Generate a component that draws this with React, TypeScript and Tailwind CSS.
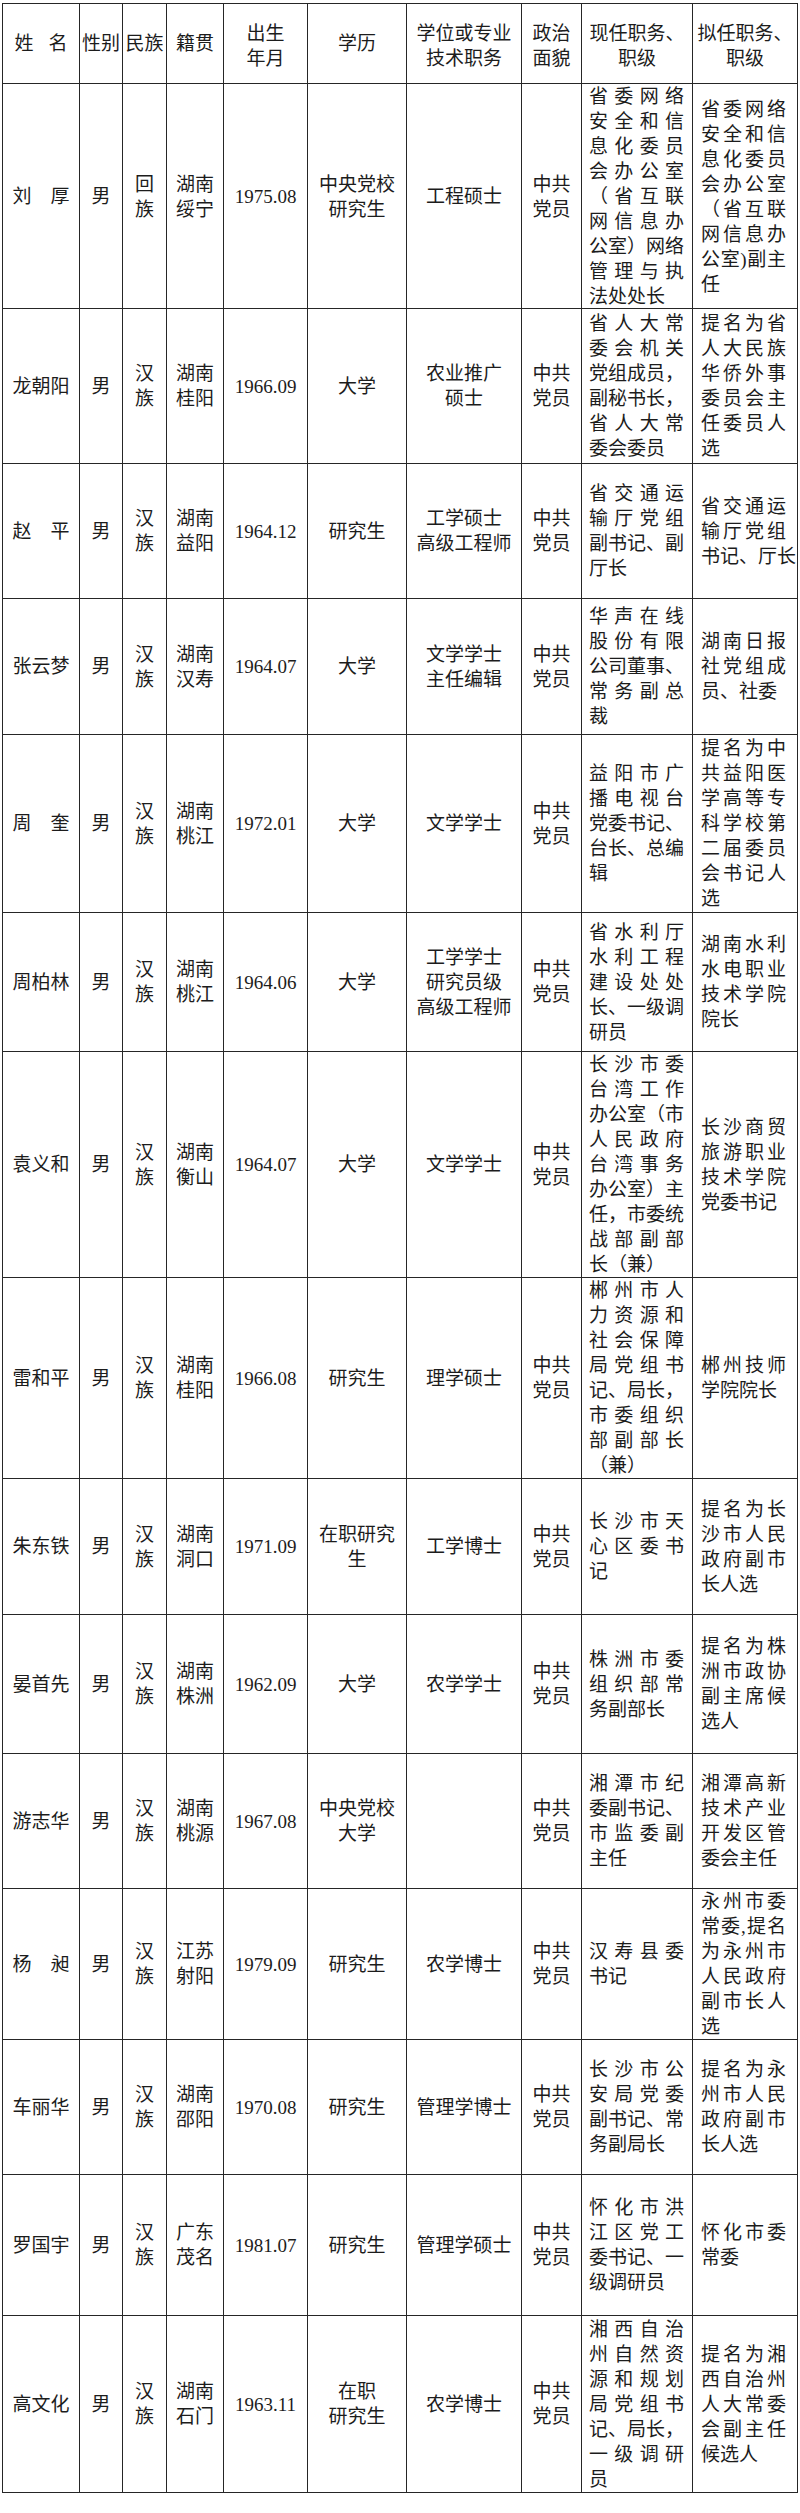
import React from 'react';

// 拟任职干部名单表

interface Cadre {
  name: string;
  nation: string[];
  origin: string[];
  birth: string;
  edu: string[];
  degree: string[];
  now: string[];
  next: string[];
  h: string;
}

const CADRES: Cadre[] = [
  {
    name: '刘　厚', nation: ['回', '族'], origin: ['湖南', '绥宁'], birth: '1975.08', edu: ['中央党校', '研究生'], degree: ['工程硕士'],
    now: ['省委网络', '安全和信', '息化委员', '会办公室', '（省互联', '网信息办', '公室）网络', '管理与执', '法处处长'],
    next: ['省委网络', '安全和信', '息化委员', '会办公室', '（省互联', '网信息办', '公室)副主', '任'],
    h: 'h-[225px]',
  },
  {
    name: '龙朝阳', nation: ['汉', '族'], origin: ['湖南', '桂阳'], birth: '1966.09', edu: ['大学'], degree: ['农业推广', '硕士'],
    now: ['省人大常', '委会机关', '党组成员，', '副秘书长，', '省人大常', '委会委员'],
    next: ['提名为省', '人大民族', '华侨外事', '委员会主', '任委员人', '选'],
    h: 'h-[155px]',
  },
  {
    name: '赵　平', nation: ['汉', '族'], origin: ['湖南', '益阳'], birth: '1964.12', edu: ['研究生'], degree: ['工学硕士', '高级工程师'],
    now: ['省交通运', '输厅党组', '副书记、副', '厅长'],
    next: ['省交通运', '输厅党组', '书记、厅长'],
    h: 'h-[135px]',
  },
  {
    name: '张云梦', nation: ['汉', '族'], origin: ['湖南', '汉寿'], birth: '1964.07', edu: ['大学'], degree: ['文学学士', '主任编辑'],
    now: ['华声在线', '股份有限', '公司董事、', '常务副总', '裁'],
    next: ['湖南日报', '社党组成', '员、社委'],
    h: 'h-[136px]',
  },
  {
    name: '周　奎', nation: ['汉', '族'], origin: ['湖南', '桃江'], birth: '1972.01', edu: ['大学'], degree: ['文学学士'],
    now: ['益阳市广', '播电视台', '党委书记、', '台长、总编', '辑'],
    next: ['提名为中', '共益阳医', '学高等专', '科学校第', '二届委员', '会书记人', '选'],
    h: 'h-[178px]',
  },
  {
    name: '周柏林', nation: ['汉', '族'], origin: ['湖南', '桃江'], birth: '1964.06', edu: ['大学'], degree: ['工学学士', '研究员级', '高级工程师'],
    now: ['省水利厅', '水利工程', '建设处处', '长、一级调', '研员'],
    next: ['湖南水利', '水电职业', '技术学院', '院长'],
    h: 'h-[139px]',
  },
  {
    name: '袁义和', nation: ['汉', '族'], origin: ['湖南', '衡山'], birth: '1964.07', edu: ['大学'], degree: ['文学学士'],
    now: ['长沙市委', '台湾工作', '办公室（市', '人民政府', '台湾事务', '办公室）主', '任，市委统', '战部副部', '长（兼）'],
    next: ['长沙商贸', '旅游职业', '技术学院', '党委书记'],
    h: 'h-[226px]',
  },
  {
    name: '雷和平', nation: ['汉', '族'], origin: ['湖南', '桂阳'], birth: '1966.08', edu: ['研究生'], degree: ['理学硕士'],
    now: ['郴州市人', '力资源和', '社会保障', '局党组书', '记、局长，', '市委组织', '部副部长', '（兼）'],
    next: ['郴州技师', '学院院长'],
    h: 'h-[201px]',
  },
  {
    name: '朱东铁', nation: ['汉', '族'], origin: ['湖南', '洞口'], birth: '1971.09', edu: ['在职研究', '生'], degree: ['工学博士'],
    now: ['长沙市天', '心区委书', '记'],
    next: ['提名为长', '沙市人民', '政府副市', '长人选'],
    h: 'h-[136px]',
  },
  {
    name: '晏首先', nation: ['汉', '族'], origin: ['湖南', '株洲'], birth: '1962.09', edu: ['大学'], degree: ['农学学士'],
    now: ['株洲市委', '组织部常', '务副部长'],
    next: ['提名为株', '洲市政协', '副主席候', '选人'],
    h: 'h-[139px]',
  },
  {
    name: '游志华', nation: ['汉', '族'], origin: ['湖南', '桃源'], birth: '1967.08', edu: ['中央党校', '大学'], degree: [],
    now: ['湘潭市纪', '委副书记、', '市监委副', '主任'],
    next: ['湘潭高新', '技术产业', '开发区管', '委会主任'],
    h: 'h-[135px]',
  },
  {
    name: '杨　昶', nation: ['汉', '族'], origin: ['江苏', '射阳'], birth: '1979.09', edu: ['研究生'], degree: ['农学博士'],
    now: ['汉寿县委', '书记'],
    next: ['永州市委', '常委,提名', '为永州市', '人民政府', '副市长人', '选'],
    h: 'h-[151px]',
  },
  {
    name: '车丽华', nation: ['汉', '族'], origin: ['湖南', '邵阳'], birth: '1970.08', edu: ['研究生'], degree: ['管理学博士'],
    now: ['长沙市公', '安局党委', '副书记、常', '务副局长'],
    next: ['提名为永', '州市人民', '政府副市', '长人选'],
    h: 'h-[135px]',
  },
  {
    name: '罗国宇', nation: ['汉', '族'], origin: ['广东', '茂名'], birth: '1981.07', edu: ['研究生'], degree: ['管理学硕士'],
    now: ['怀化市洪', '江区党工', '委书记、一', '级调研员'],
    next: ['怀化市委', '常委'],
    h: 'h-[141px]',
  },
  {
    name: '高文化', nation: ['汉', '族'], origin: ['湖南', '石门'], birth: '1963.11', edu: ['在职', '研究生'], degree: ['农学博士'],
    now: ['湘西自治', '州自然资', '源和规划', '局党组书', '记、局长，', '一级调研', '员'],
    next: ['提名为湘', '西自治州', '人大常委', '会副主任', '候选人'],
    h: 'h-[177px]',
  },
];

const COLS = 'grid grid-cols-[77px_43px_44px_57px_84px_99px_115px_60px_111px_105px]';
const CELL = 'border-r border-[#262626] flex items-center justify-center text-center';

function Lines({ lines }: { lines: string[] }) {
  return (
    <div>
      {lines.map((l, i) => (
        <div key={i} className="whitespace-nowrap">{l}</div>
      ))}
    </div>
  );
}

// 职务栏：除末行外两端对齐
function Duty({ lines, pad }: { lines: string[]; pad: string }) {
  return (
    <div className={`border-r border-[#262626] flex items-center ${pad}`}>
      <div className="w-full">
        {lines.map((l, i) => (
          <div key={i} className={`whitespace-nowrap ${i < lines.length - 1 ? 'text-justify [text-align-last:justify]' : 'text-left'}`}>
            {l}
          </div>
        ))}
      </div>
    </div>
  );
}

export default function App() {
  return (
    <div className="bg-white min-h-[2513px] pt-[3px] pl-[2px] text-[#1c1c1c] text-[19px] leading-[25px] font-['Liberation_Serif','Noto_Sans_CJK_SC',serif]">
      <div className="w-[796px] border-l border-t border-[#262626]">
        {/* 表头 */}
        <div className={`${COLS} h-[80px] border-b border-[#262626]`}>
          <div className={CELL}>姓<span className="inline-block w-[15px]" />名</div>
          <div className={CELL}>性别</div>
          <div className={CELL}>民族</div>
          <div className={CELL}>籍贯</div>
          <div className={`${CELL} pt-[4px]`}><Lines lines={['出生', '年月']} /></div>
          <div className={CELL}>学历</div>
          <div className={`${CELL} pt-[4px]`}><Lines lines={['学位或专业', '技术职务']} /></div>
          <div className={`${CELL} pt-[4px]`}><Lines lines={['政治', '面貌']} /></div>
          <div className={`${CELL} pt-[4px]`}><Lines lines={['现任职务、', '职级']} /></div>
          <div className={`${CELL} pt-[4px]`}><Lines lines={['拟任职务、', '职级']} /></div>
        </div>

        {CADRES.map(c => (
          <div key={c.name} className={`${COLS} ${c.h} border-b border-[#262626]`}>
            <div className={CELL}>{c.name}</div>
            <div className={CELL}>男</div>
            <div className={CELL}><Lines lines={c.nation} /></div>
            <div className={CELL}><Lines lines={c.origin} /></div>
            <div className={CELL}>{c.birth}</div>
            <div className={CELL}><Lines lines={c.edu} /></div>
            <div className={CELL}><Lines lines={c.degree} /></div>
            <div className={CELL}><Lines lines={['中共', '党员']} /></div>
            <Duty lines={c.now} pad="pl-[7px] pr-[8px]" />
            <Duty lines={c.next} pad="pl-[8px] pr-[11px]" />
          </div>
        ))}
      </div>
    </div>
  );
}
